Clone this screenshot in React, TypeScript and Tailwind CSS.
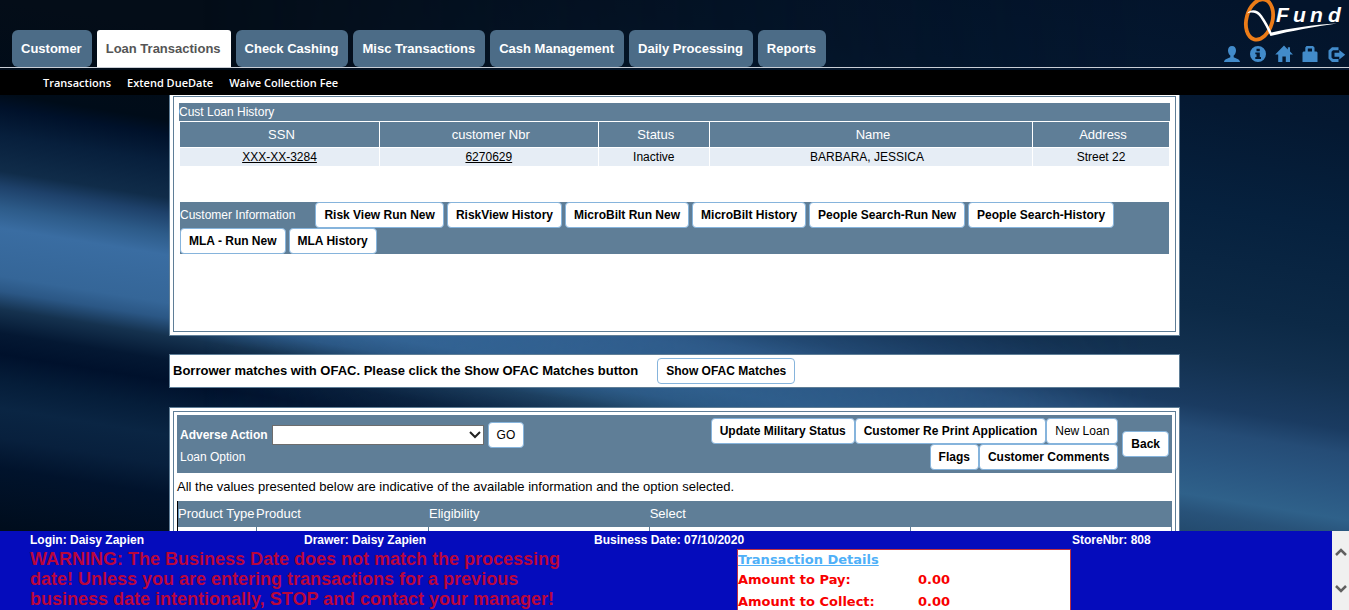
import React from "react";

const tabs = [
  "Customer",
  "Loan Transactions",
  "Check Cashing",
  "Misc Transactions",
  "Cash Management",
  "Daily Processing",
  "Reports",
];

const subMenu = ["Transactions", "Extend DueDate", "Waive Collection Fee"];

const reportButtons = [
  "Risk View Run New",
  "RiskView History",
  "MicroBilt Run New",
  "MicroBilt History",
  "People Search-Run New",
  "People Search-History",
  "MLA - Run New",
  "MLA History",
];

function Backdrop() {
  return (
    <svg
      className="absolute inset-0 -z-10 h-full w-full"
      viewBox="0 0 1349 610"
      preserveAspectRatio="none"
      aria-hidden="true"
    >
      <defs>
        <linearGradient id="beam" gradientUnits="userSpaceOnUse" x1="0" y1="0" x2="-94" y2="585">
          <stop offset="0" stopColor="#040d18" />
          <stop offset="0.155" stopColor="#000c19" />
          <stop offset="0.18" stopColor="#00112a" />
          <stop offset="0.225" stopColor="#071f3c" />
          <stop offset="0.285" stopColor="#102c49" />
          <stop offset="0.31" stopColor="#1e416a" />
          <stop offset="0.345" stopColor="#2d5b89" />
          <stop offset="0.38" stopColor="#3a6da2" />
          <stop offset="0.46" stopColor="#356698" />
          <stop offset="0.485" stopColor="#2b5785" />
          <stop offset="0.515" stopColor="#15324f" />
          <stop offset="0.555" stopColor="#041833" />
          <stop offset="0.59" stopColor="#00112c" />
          <stop offset="0.635" stopColor="#051d39" />
          <stop offset="0.68" stopColor="#0a2543" />
          <stop offset="0.73" stopColor="#08203d" />
          <stop offset="0.78" stopColor="#01132c" />
          <stop offset="0.88" stopColor="#000d1d" />
        </linearGradient>
        <linearGradient id="glow" gradientUnits="userSpaceOnUse" x1="32" y1="-195" x2="-63" y2="390">
          <stop offset="0" stopColor="#03142b" />
          <stop offset="0.18" stopColor="#041831" />
          <stop offset="0.35" stopColor="#06213e" />
          <stop offset="0.52" stopColor="#0c2946" />
          <stop offset="0.6" stopColor="#12304f" />
          <stop offset="0.685" stopColor="#1a3b61" />
          <stop offset="0.725" stopColor="#254c76" />
          <stop offset="0.785" stopColor="#2a5782" />
          <stop offset="0.835" stopColor="#2f618a" />
          <stop offset="0.865" stopColor="#285279" />
          <stop offset="0.92" stopColor="#204567" />
        </linearGradient>
        <linearGradient id="blend" x1="0" y1="0" x2="1" y2="0">
          <stop offset="0.15" stopColor="#000" />
          <stop offset="0.85" stopColor="#fff" />
        </linearGradient>
        <mask id="fade">
          <rect width="1349" height="610" fill="url(#blend)" />
        </mask>
      </defs>
      <rect width="1349" height="610" fill="url(#beam)" />
      <rect width="1349" height="610" fill="url(#glow)" mask="url(#fade)" />
    </svg>
  );
}

function Logo() {
  return (
    <svg width="110" height="42" viewBox="0 0 110 42" role="img" aria-label="QFund">
      <ellipse
        cx="20.5"
        cy="19.5"
        rx="13"
        ry="20.5"
        transform="rotate(15 20.5 19.5)"
        fill="none"
        stroke="#ec7c18"
        strokeWidth="3.8"
      />
      <path
        d="M8 13.5C12 8.500 19 9.500 23 15.500C27 21 30 27 32.500 32.500C50 28.500 74 24.500 98 23.500C76 26.500 52 31 31.500 36C28.500 29.500 25 23 21 17C18 12.500 12 11.500 8 13.500Z"
        fill="#fff"
      />
      <text
        x="37 54 71 89"
        y="22"
        fill="#fff"
        fontFamily="'Liberation Sans', Arial, sans-serif"
        fontSize="21"
        fontStyle="italic"
        fontWeight="700"
      >
        Fund
      </text>
    </svg>
  );
}

const icons: { label: string; path: React.ReactNode }[] = [
  {
    label: "Profile",
    path: (
      <path d="M8 0C5.400 0 4 1.900 4 4.500C4 6.700 5 8.600 6.300 9.600V11.200C5.800 12 0 12.600 0 16H16C16 12.600 10.200 12 9.700 11.200V9.600C11 8.600 12 6.700 12 4.500C12 1.900 10.600 0 8 0Z" />
    ),
  },
  {
    label: "Information",
    path: (
      <path
        fillRule="evenodd"
        d="M8 0a8 8 0 1 0 0 16a8 8 0 1 0 0-16ZM6.500 2.800H9.800V5.200H6.500ZM5.300 6.400H9.800V11H11V13H5.300V11H6.500V8.300H5.300Z"
      />
    ),
  },
  {
    label: "Home",
    path: <path d="M8 -.5L11.800 3.400V1.200H14V5.500L17 8.600H14V16H9.800V10.500H6.400V16H2.200V8.600H-.8Z" />,
  },
  {
    label: "Lock",
    path: (
      <path
        fillRule="evenodd"
        d="M4.500 0H11L12.500 1.500V5.500H14.500L15.500 6.500V16H.5V6.500L1.500 5.500H3.300V1.500ZM5.800 2.500V5.500H10V2.500Z"
      />
    ),
  },
  {
    label: "Log out",
    path: (
      <path d="M10.500 1.300H4L.5 4.500V12.500L4 16H10.500V13H5L3.500 11.500V5.800L5 4.300H10.500ZM11.300 4L17.200 8.700L11.300 13.500V10.700H6.500V6.700H11.300Z" />
    ),
  },
];

function Button({ children, plain = false }: { children: React.ReactNode; plain?: boolean }) {
  return (
    <button
      type="button"
      className={
        "h-[26px] rounded-[4px] border border-[#86b4dc] bg-white px-2 text-xs whitespace-nowrap text-black " +
        (plain ? "font-normal" : "font-bold")
      }
    >
      {children}
    </button>
  );
}

function Header() {
  return (
    <header>
      <div className="flex h-[68px] items-end justify-between border-b border-[#c9ced6] pl-3">
        <nav className="flex gap-[5px]">
          {tabs.map((tab) => (
            <a
              key={tab}
              href="#"
              className={
                "flex h-[37px] items-center px-[10px] pl-[9px] text-[13px] font-bold whitespace-nowrap " +
                (tab === "Loan Transactions"
                  ? "rounded-t-[3px] bg-white text-[#555555]"
                  : "rounded-[6px] bg-[#4c6c87] text-white")
              }
            >
              {tab}
            </a>
          ))}
        </nav>
        <div className="flex flex-col items-end gap-1 self-start">
          <Logo />
          <div className="flex gap-[10px] pr-[5px] text-[#428bca]">
            {icons.map((icon) => (
              <a key={icon.label} href="#" aria-label={icon.label}>
                <svg width="16" height="16" viewBox="0 0 16 16" fill="currentColor" overflow="visible">
                  {icon.path}
                </svg>
              </a>
            ))}
          </div>
        </div>
      </div>
      <nav className="mt-[2px] flex h-[25px] items-center gap-4 bg-black pt-px pl-[43px] font-['Open_Sans','Noto_Sans',sans-serif] text-[11px] font-semibold text-white">
        {subMenu.map((item) => (
          <a key={item} href="#">
            {item}
          </a>
        ))}
      </nav>
    </header>
  );
}

function HistoryPanel() {
  return (
    <section className="border border-t-0 border-[#5f7e97] bg-white px-[3px] pt-px pb-[3px]">
      <div className="h-[236px] border border-[#5f7e97] px-[5px] pt-[6px]">
        <h2 className="h-[18px] bg-[#5f7e97] text-xs leading-[18px] text-white">Cust Loan History</h2>
        <table className="w-full table-fixed border-separate border-spacing-px text-center text-xs">
          <colgroup>
            <col className="w-[20.2%]" />
            <col className="w-[22.1%]" />
            <col className="w-[11.2%]" />
            <col className="w-[32.7%]" />
            <col />
          </colgroup>
          <thead>
            <tr className="h-[25px] bg-[#5f7e97] text-[13px] text-white">
              <th className="p-0 pl-1 font-normal">SSN</th>
              <th className="p-0 pl-1 font-normal">customer Nbr</th>
              <th className="p-0 pl-1 font-normal">Status</th>
              <th className="p-0 pl-1 font-normal">Name</th>
              <th className="p-0 pl-1 font-normal">Address</th>
            </tr>
          </thead>
          <tbody>
            <tr className="h-[18px] bg-[#e6edf5]">
              <td className="p-0">
                <a href="#" className="underline">
                  XXX-XX-3284
                </a>
              </td>
              <td className="p-0">
                <a href="#" className="underline">
                  6270629
                </a>
              </td>
              <td className="p-0">Inactive</td>
              <td className="p-0 pr-2">BARBARA, JESSICA</td>
              <td className="p-0">Street 22</td>
            </tr>
          </tbody>
        </table>
        <div className="mx-px mt-[35px] flex flex-wrap gap-x-[3px] bg-[#5f7e97]">
          <span className="mr-[17px] flex h-[26px] items-center text-xs text-white">Customer Information</span>
          {reportButtons.map((label) => (
            <Button key={label}>{label}</Button>
          ))}
        </div>
      </div>
    </section>
  );
}

function OfacPanel() {
  return (
    <section className="mt-[18px] flex h-[34px] items-center gap-[19px] border border-[#5f7e97] bg-white pl-[3px]">
      <p className="text-[13px] font-bold">
        Borrower matches with OFAC. Please click the Show OFAC Matches button
      </p>
      <Button>Show OFAC Matches</Button>
    </section>
  );
}

function LoanPanel() {
  return (
    <section className="mt-[19px] border border-[#5f7e97] bg-white p-[3px]">
      <div className="border border-[#5f7e97] p-[3px]">
        <div className="flex justify-between bg-[#5f7e97] py-[3px] pr-[3px] pl-[3px] text-xs text-white">
          <div className="pt-1">
            <div className="flex h-[26px] items-center gap-1">
              <label htmlFor="adverse-action" className="font-bold">
                Adverse Action
              </label>
              <span className="relative">
                <select
                  id="adverse-action"
                  className="block h-5 w-[212px] appearance-none border border-[#6d6d6d] bg-white text-black"
                />
                <svg
                  className="pointer-events-none absolute top-[6px] right-[3px]"
                  width="12"
                  height="8"
                  viewBox="0 0 12 8"
                  fill="none"
                  stroke="#222"
                  strokeWidth="2"
                >
                  <path d="M1 1L6 6L11 1" />
                </svg>
              </span>
              <Button plain>GO</Button>
            </div>
            <p className="leading-[18px]">Loan Option</p>
          </div>
          <div className="flex items-center gap-1">
            <div className="flex flex-col items-end">
              <div className="flex">
                <Button>Update Military Status</Button>
                <Button>Customer Re Print Application</Button>
                <Button plain>New Loan</Button>
              </div>
              <div className="flex">
                <Button>Flags</Button>
                <Button>Customer Comments</Button>
              </div>
            </div>
            <Button>Back</Button>
          </div>
        </div>
        <p className="h-7 text-[13px] leading-7 text-black">
          All the values presented below are indicative of the available information and the option selected.
        </p>
        <table className="w-full table-fixed border-collapse text-left text-[13px]">
          <colgroup>
            <col className="w-[7.9%]" />
            <col className="w-[17.4%]" />
            <col className="w-[22.2%]" />
            <col className="w-[26.2%]" />
            <col />
          </colgroup>
          <thead>
            <tr className="h-[26px] border-l border-l-black bg-[#5f7e97] text-white">
              <th className="p-0 font-normal whitespace-nowrap">Product Type</th>
              <th className="p-0 font-normal">Product</th>
              <th className="p-0 font-normal">Eligibility</th>
              <th className="p-0 font-normal">Select</th>
              <th className="p-0" />
            </tr>
          </thead>
          <tbody>
            <tr className="h-6 border-l border-l-black">
              <td className="border-r border-[#5f7e97]" />
              <td className="border-r border-[#5f7e97]" />
              <td className="border-r border-[#5f7e97]" />
              <td className="border-r border-[#5f7e97]" />
              <td className="border-r border-[#5f7e97]" />
            </tr>
          </tbody>
        </table>
      </div>
    </section>
  );
}

function Footer() {
  return (
    <footer className="flex h-[79px] shrink-0 overflow-hidden bg-[#050cbc]">
      <div className="min-w-0 flex-1 pl-[30px]">
        <div className="grid h-[18px] grid-cols-[274fr_290fr_478fr_260fr] items-center text-xs font-bold text-white">
          <span>Login: Daisy Zapien</span>
          <span>Drawer: Daisy Zapien</span>
          <span>Business Date: 07/10/2020</span>
          <span>StoreNbr: 808</span>
        </div>
        <div className="flex items-start">
          <div className="w-[707px] shrink-0">
            <p className="w-[560px] text-lg leading-5 font-bold text-[#b9063c]">
              WARNING: The Business Date does not match the processing date! Unless you are entering
              transactions for a previous business date intentionally, STOP and contact your manager!
            </p>
          </div>
          <div className="h-20 w-[334px] border border-[#c03040] bg-white font-['DejaVu_Sans',sans-serif] text-[13px] font-bold text-[#f80000]">
            <h2 className="leading-5 text-[#4fb0f8] underline">Transaction Details</h2>
            <dl className="grid grid-cols-[180px_1fr]">
              <dt className="leading-5">Amount to Pay:</dt>
              <dd className="leading-5">0.00</dd>
              <dt className="leading-6">Amount to Collect:</dt>
              <dd className="leading-6">0.00</dd>
            </dl>
          </div>
        </div>
      </div>
      <div className="flex w-[17px] flex-col items-center justify-between bg-[#f0f0f0] pt-4 pb-[15px]">
        {["M1 8L6 3L11 8", "M1 1L6 6L11 1"].map((d) => (
          <svg key={d} width="12" height="10" viewBox="0 0 12 10" fill="none" stroke="#606060" strokeWidth="2.500">
            <path d={d} />
          </svg>
        ))}
      </div>
    </footer>
  );
}

export default function App() {
  return (
    <div className="relative isolate flex h-screen flex-col overflow-hidden font-['Liberation_Sans',Arial,sans-serif] text-black">
      <Backdrop />
      <Header />
      <main className="min-h-0 flex-1 overflow-hidden px-[169px]">
        <HistoryPanel />
        <OfacPanel />
        <LoanPanel />
      </main>
      <Footer />
    </div>
  );
}
